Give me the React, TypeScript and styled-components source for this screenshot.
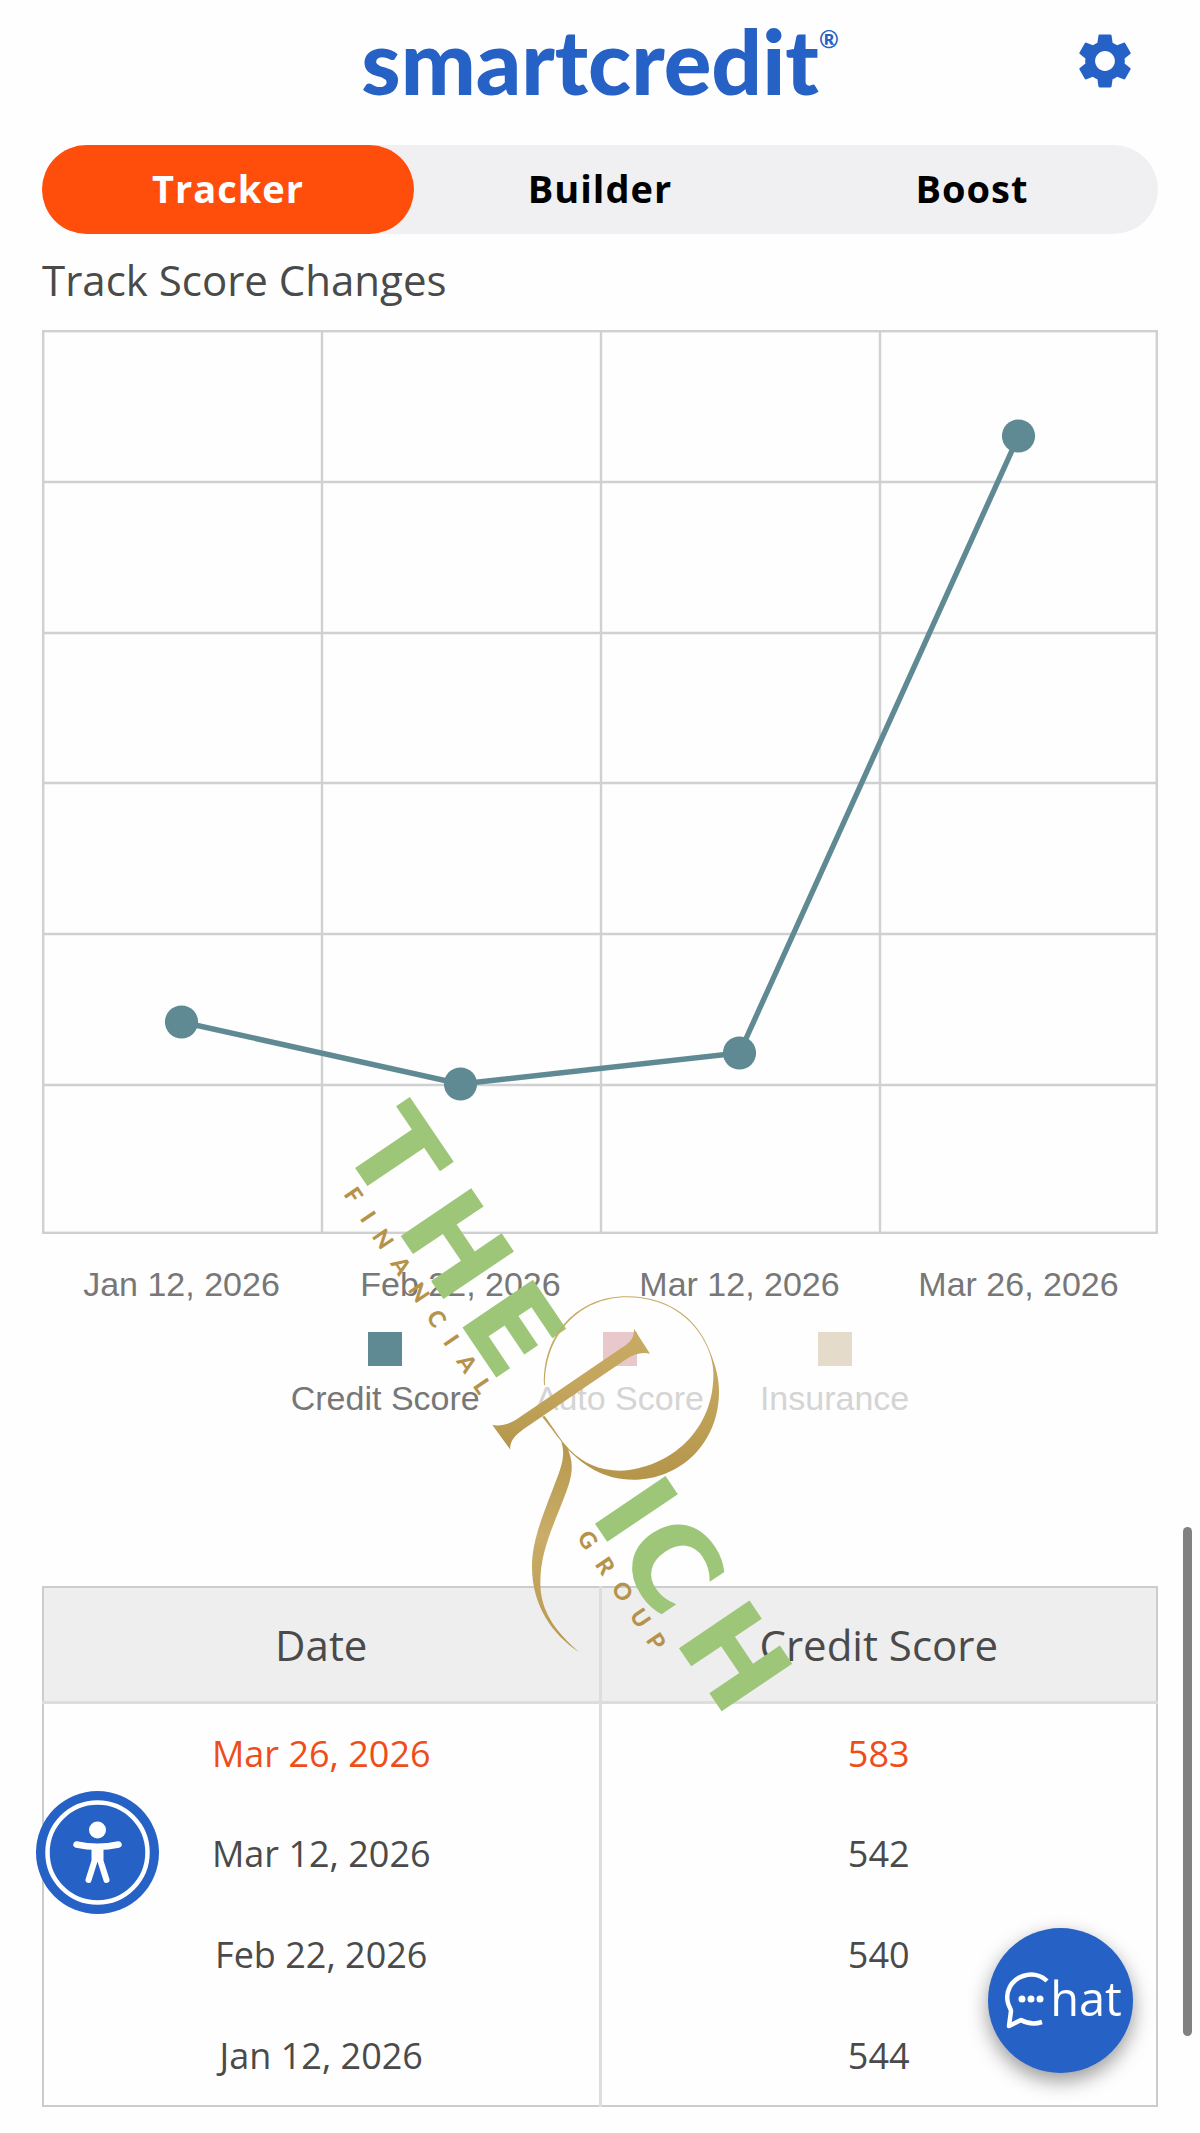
import React from 'react';
import styled, { createGlobalStyle } from 'styled-components';
import { MdSettings } from 'react-icons/md';

const BLUE = '#2661c6';
const ORANGE = '#ff4d0c';
const TEAL = '#608a93';
const BODY_FONT = '"Open Sans", "Noto Sans", sans-serif';
const CHART_FONT = '"Liberation Sans", Arial, sans-serif';

const GlobalStyle = createGlobalStyle`
  *, *::before, *::after { box-sizing: border-box; }
  body {
    margin: 0;
    background: #fefefe;
    color: #4a4a4a;
    font-family: ${BODY_FONT};
  }
  button { font: inherit; border: 0; padding: 0; cursor: pointer; }
`;

const Page = styled.main`
  position: relative;
  padding: 0 42px 26px;
`;

const Header = styled.header`
  display: grid;
  grid-template-columns: 1fr auto 1fr;
  align-items: center;
  height: 122px;
  margin-bottom: 23px;
`;

const Logo = styled.a`
  grid-column: 2;
  display: flex;
  align-items: flex-start;
  color: ${BLUE};
  font: 900 89px/120px Lato, sans-serif;
  text-decoration: none;
`;

const Registered = styled.sup`
  font: 700 24px/76px Lato, sans-serif;
`;

const SettingsButton = styled.button`
  justify-self: end;
  display: flex;
  margin-right: 20px;
  background: none;
  color: ${BLUE};
  font-size: 66px;
`;

const Tabs = styled.nav`
  display: grid;
  grid-template-columns: repeat(3, 1fr);
  border-radius: 45px;
  background: #f0f0f2;
`;

const Tab = styled.button<{ $active?: boolean }>`
  height: 89px;
  padding-bottom: 3px;
  border-radius: 45px;
  background: ${(p) => (p.$active ? ORANGE : 'transparent')};
  color: ${(p) => (p.$active ? '#fff' : '#000')};
  font-size: 38px;
  font-weight: 700;
  letter-spacing: 1px;
`;

const Title = styled.h1`
  margin: 16px 0 20px;
  font-size: 42px;
  font-weight: 400;
  line-height: 60px;
`;

const ChartSvg = styled.svg`
  display: block;
  width: 100%;
  height: auto;
`;

const AxisLabels = styled.div`
  display: grid;
  grid-template-columns: repeat(4, 1fr);
  margin-top: 30px;
  color: #777;
  font: 34px/40px ${CHART_FONT};
  text-align: center;
`;

const Legend = styled.ul`
  display: flex;
  justify-content: center;
  gap: 56px;
  margin: 28px 0 0;
  padding: 0;
  list-style: none;
  font: 34px/40px ${CHART_FONT};
`;

const LegendItem = styled.li<{ $off?: boolean }>`
  display: flex;
  flex-direction: column;
  align-items: center;
  gap: 12px;
  color: ${(p) => (p.$off ? '#d4d4d4' : '#777')};
`;

const Swatch = styled.span<{ $color: string }>`
  width: 34px;
  height: 34px;
  background: ${(p) => p.$color};
`;

const ScoreTable = styled.table`
  width: 100%;
  margin-top: 168px;
  border: 2px solid #ccc;
  border-collapse: collapse;
  table-layout: fixed;
  text-align: center;
`;

const HeadCell = styled.th`
  height: 115px;
  padding: 0;
  border-bottom: 3px solid #ddd;
  background: #eee;
  font-size: 42px;
  font-weight: 400;
  & + & { border-left: 3px solid #ddd; }
`;

const Cell = styled.td<{ $latest?: boolean }>`
  height: 101px;
  padding: 0;
  color: ${(p) => (p.$latest ? '#ee4d1a' : '#4a4a4a')};
  font-size: 36px;
  & + & { border-left: 3px solid #ddd; }
`;

const Watermark = styled.svg`
  position: absolute;
  top: 990px;
  left: calc(50% - 400px);
  width: 720px;
  height: 800px;
  overflow: visible;
  pointer-events: none;
`;

const AccessButton = styled.button`
  position: fixed;
  left: 36px;
  bottom: 219px;
  width: 123px;
  height: 123px;
  border-radius: 50%;
  background: ${BLUE};
  svg { display: block; }
`;

const ChatButton = styled.button`
  position: fixed;
  right: 67px;
  bottom: 60px;
  display: flex;
  align-items: center;
  justify-content: center;
  width: 145px;
  height: 145px;
  padding-left: 5px;
  border-radius: 50%;
  background: ${BLUE};
  box-shadow: 0 8px 20px rgba(0, 0, 0, 0.4);
  color: #fff;
`;

const ChatWord = styled.span`
  padding-bottom: 6px;
  font-size: 47px;
  line-height: 60px;
`;

const ScrollThumb = styled.div`
  position: fixed;
  right: 8px;
  bottom: 97px;
  width: 9px;
  height: 509px;
  border-radius: 5px;
  background: #818181;
`;

const scores = [
  { date: 'Jan 12, 2026', score: 544, plotY: 692 },
  { date: 'Feb 22, 2026', score: 540, plotY: 754 },
  { date: 'Mar 12, 2026', score: 542, plotY: 723 },
  { date: 'Mar 26, 2026', score: 583, plotY: 106 },
];

const legend = [
  { label: 'Credit Score', color: TEAL },
  { label: 'Auto Score', color: '#e9c8cc', off: true },
  { label: 'Insurance', color: '#e5dbca', off: true },
];

const points = scores.map(({ plotY }, i) => ({ x: 139.5 + i * 279, y: plotY }));

function ScoreChart() {
  return (
    <ChartSvg viewBox="0 0 1116 904" role="img" aria-label="Credit score by date">
      <g fill="none" stroke="#d0d0d0" strokeWidth="2.4">
        <rect x="1.200" y="1.200" width="1113.600" height="901.600" />
        {[280, 559, 838].map((x) => <path key={x} d={`M${x} 1V903`} />)}
        {[152, 303, 453, 604, 755].map((y) => <path key={y} d={`M1 ${y}H1115`} />)}
      </g>
      <polyline
        points={points.map((p) => `${p.x},${p.y}`).join(' ')}
        fill="none"
        stroke={TEAL}
        strokeWidth="5.400"
      />
      {points.map((p) => <circle key={p.x} cx={p.x} cy={p.y} r="16.600" fill={TEAL} />)}
    </ChartSvg>
  );
}

function RichGroupMark() {
  return (
    <Watermark viewBox="-360 -240 2160 2400" role="img" aria-label="The Rich Financial Group">
      <defs>
        <linearGradient id="gold" x1="0" y1="0" x2="0" y2="1">
          <stop offset="0" stopColor="#c8ab65" />
          <stop offset="0.5" stopColor="#c3a55d" />
          <stop offset="1" stopColor="#b4954a" />
        </linearGradient>
        <linearGradient id="goldLeg" x1="0" y1="0" x2="0" y2="1">
          <stop offset="0" stopColor="#b6974c" />
          <stop offset="0.45" stopColor="#c9ad68" />
          <stop offset="1" stopColor="#b6974c" />
        </linearGradient>
      </defs>
      <g transform="translate(48 195) rotate(56)" textAnchor="middle">
        <g fill="#9dc678" fontFamily="DejaVu Sans, sans-serif" fontWeight="700" fontSize="350">
          <text x="147 474 778" y="8">THE</text>
          <text x="1434 1632 1966" y="8">ICH</text>
        </g>
        <g fill="#b5934a" fontFamily="Lato, sans-serif" fontWeight="900" fontSize="69">
          <text x="179 257 338 434 531 625 704 788 870" y="82">FINANCIAL</text>
          <text x="1429 1523 1616 1712 1796" y="78">GROUP</text>
        </g>
      </g>
      <path
        fill="url(#gold)"
        d="M672 945C668 790 775 679 920 679C1060 679 1140 760 1172 850C1185 885 1197 920 1197 965C1197 1120 1080 1229 940 1229C850 1229 790 1185 745 1140C715 1105 695 1075 666 1040L674 1038C700 1072 720 1110 750 1140C790 1180 840 1202 900 1202C1050 1195 1185 1080 1180 905C1179 885 1175 868 1169 850C1138 763 1058 682 920 682C778 682 674 795 675 945Z"
      />
      <path
        fill="url(#goldLeg)"
        d="M724 1115C735 1150 728 1180 712 1222C680 1310 636 1400 636 1490C636 1610 700 1695 777 1746C705 1685 661 1620 661 1540C661 1440 700 1370 740 1262C765 1195 755 1165 741 1130Z"
      />
      <path
        fill="url(#gold)"
        d="M942 776C944 800 930 820 905 833L600 1041C575 1060 545 1070 517 1065L571 1139C568 1115 585 1097 610 1078L915 870C940 852 965 845 990 851Z"
      />
    </Watermark>
  );
}

export default function App() {
  return (
    <>
      <GlobalStyle />
      <Page>
        <Header>
          <Logo href="#">smartcredit<Registered>®</Registered></Logo>
          <SettingsButton aria-label="Settings"><MdSettings /></SettingsButton>
        </Header>
        <Tabs>
          <Tab $active>Tracker</Tab>
          <Tab>Builder</Tab>
          <Tab>Boost</Tab>
        </Tabs>
        <Title>Track Score Changes</Title>
        <ScoreChart />
        <AxisLabels>
          {scores.map(({ date }) => <span key={date}>{date}</span>)}
        </AxisLabels>
        <Legend>
          {legend.map(({ label, color, off }) => (
            <LegendItem key={label} $off={off}>
              <Swatch $color={color} />
              {label}
            </LegendItem>
          ))}
        </Legend>
        <ScoreTable>
          <thead>
            <tr>
              <HeadCell scope="col">Date</HeadCell>
              <HeadCell scope="col">Credit Score</HeadCell>
            </tr>
          </thead>
          <tbody>
            {[...scores].reverse().map(({ date, score }, i) => (
              <tr key={date}>
                <Cell $latest={i === 0}>{date}</Cell>
                <Cell $latest={i === 0}>{score}</Cell>
              </tr>
            ))}
          </tbody>
        </ScoreTable>
        <RichGroupMark />
      </Page>
      <AccessButton aria-label="Accessibility options">
        <svg viewBox="0 0 123 123" fill="none" stroke="#fff" strokeLinecap="round" strokeLinejoin="round">
          <circle cx="61.5" cy="61.5" r="50" strokeWidth="4.5" />
          <circle cx="61.5" cy="39" r="8.5" fill="#fff" stroke="none" />
          <path d="M40.500 53.500Q61.500 58 82.500 53.500" strokeWidth="6.500" />
          <path d="M58.500 57V70L52.500 89M64.500 57V70L70.500 89" strokeWidth="6" />
        </svg>
      </AccessButton>
      <ChatButton aria-label="Chat">
        <svg width="46" height="60" viewBox="0 0 46 60" fill="none" stroke="#fff" strokeWidth="4.500" strokeLinecap="butt" strokeLinejoin="round">
          <path d="M43 10C37 4 28 2 19 5C7 9 1 21 4 32C5 36 7 38 7 40L5 55L17 49C24 53 32 53 38 51" />
          <g fill="#fff" stroke="none">
            <circle cx="18" cy="28" r="3.500" />
            <circle cx="27" cy="28" r="3.500" />
            <circle cx="36" cy="28" r="3.500" />
          </g>
        </svg>
        <ChatWord>hat</ChatWord>
      </ChatButton>
      <ScrollThumb />
    </>
  );
}
